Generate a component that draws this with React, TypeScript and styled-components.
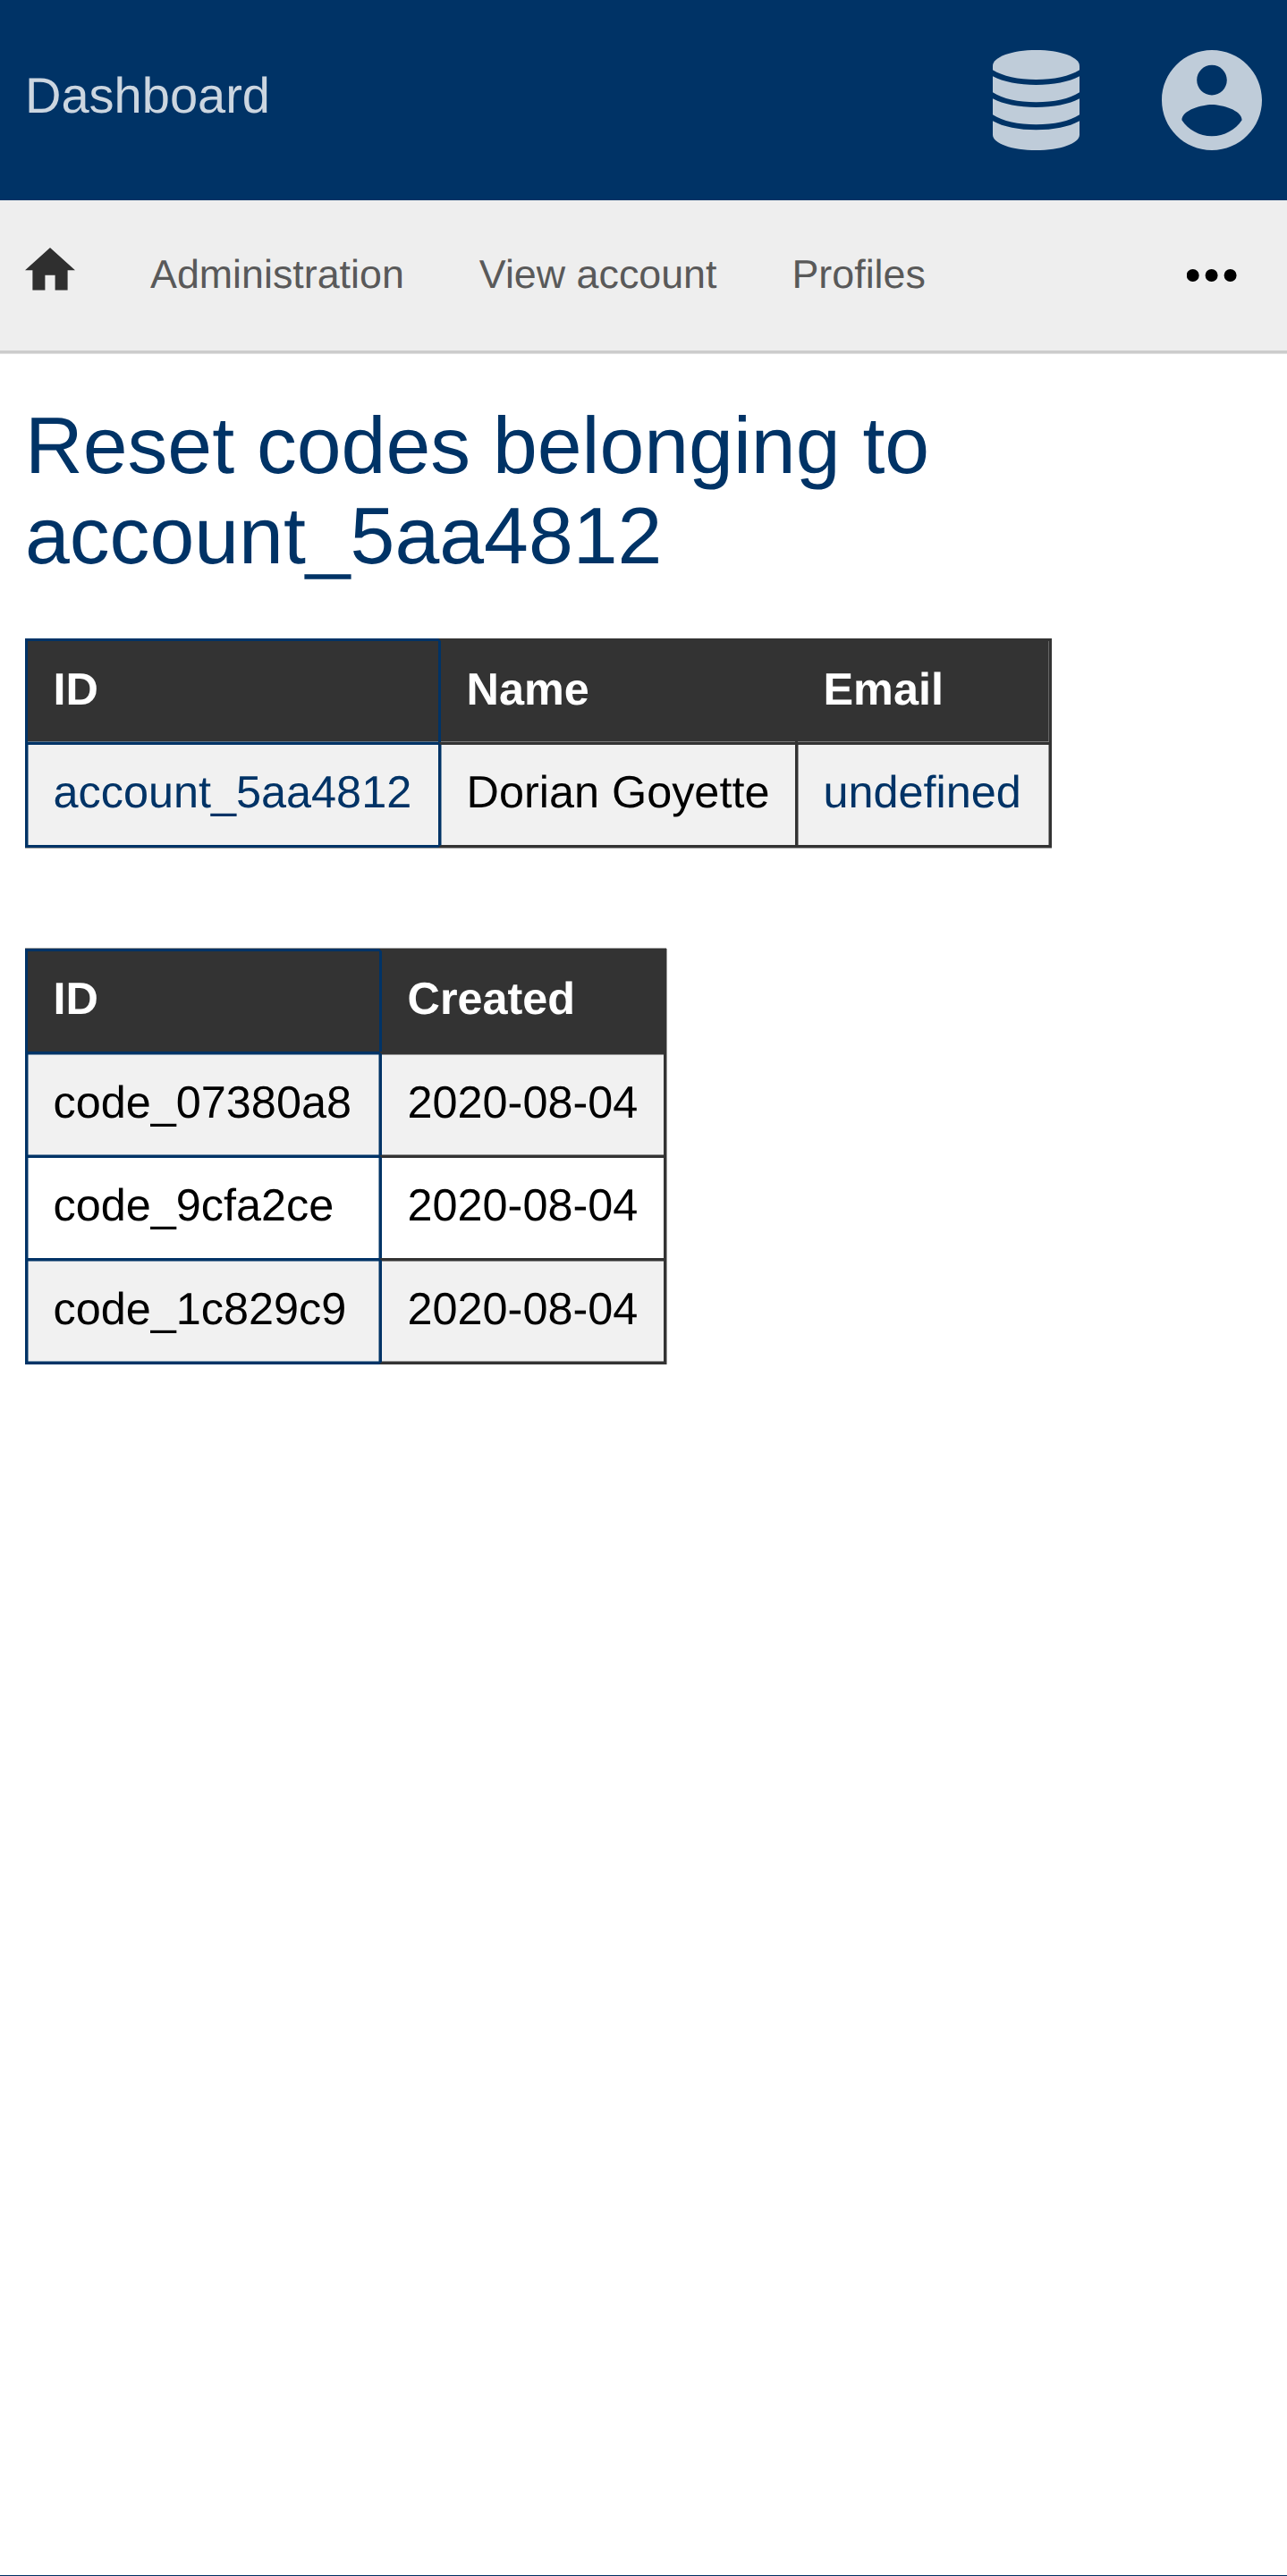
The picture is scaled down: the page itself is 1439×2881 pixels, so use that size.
import React from "react";
import styled, { createGlobalStyle, css } from "styled-components";

const navy = "#003366";
const ink = "#333333";
const navySoft = "rgba(0, 51, 102, 0.5)";
const inkSoft = "rgba(51, 51, 51, 0.5)";

const GlobalStyle = createGlobalStyle`
  html, body { margin: 0; padding: 0; background: ${navy}; }
  *, *::before, *::after { box-sizing: border-box; }
  body {
    font-family: "Liberation Sans", Arial, Helvetica, sans-serif;
    color: #000;
    text-rendering: geometricPrecision;
  }
  svg { display: block; }
`;

const Page = styled.div`
  min-height: 2881px;
  background: #fff;
  border-bottom: 1px solid ${navy};
`;

const Header = styled.header`
  height: 224px;
  padding: 0 28px;
  display: flex;
  align-items: center;
  background: ${navy};
`;

const Brand = styled.a`
  flex: 1;
  padding-bottom: 11px;
  font-size: 56px;
  line-height: 64px;
  color: #ccd6e0;
  text-decoration: none;
`;

const HeaderIcons = styled.div`
  display: flex;
  gap: 92px;
  color: #bfccd9;
`;

const Nav = styled.nav`
  height: 171px;
  padding: 0 56px 0 28px;
  display: flex;
  align-items: center;
  gap: 84px;
  background: #eee;
  border-bottom: 3px solid #ccc;
  box-shadow: 0 1px 0 #e0e0e0;
`;

const HomeLink = styled.a`
  color: #2f2f2f;
  padding-bottom: 14px;
`;

const NavLink = styled.a`
  font-size: 44.8px;
  line-height: 52px;
  padding-bottom: 2px;
  color: #595959;
  text-decoration: none;
  white-space: nowrap;
`;

const MoreButton = styled.button`
  margin-left: auto;
  padding: 0;
  border: 0;
  background: none;
  color: #000;
`;

const Main = styled.main`
  padding: 53px 28px 0;
`;

const Title = styled.h1`
  margin: 0 0 64px;
  max-width: 1200px;
  font-size: 89.6px;
  line-height: 101px;
  font-weight: 400;
  color: ${navy};
`;

const Table = styled.table<{ $width: number; $softBottom?: boolean; $softRight?: boolean }>`
  width: ${(p) => p.$width}px;
  table-layout: fixed;
  border-collapse: separate;
  border-spacing: 0;
  margin-bottom: 113px;
  font-size: 50.4px;
  line-height: 57px;
  ${(p) => p.$softBottom && css`box-shadow: 0 1px 0 ${inkSoft};`}
  ${(p) => p.$softRight && css`box-shadow: 1px 0 0 ${inkSoft}, 0 -1px 0 ${inkSoft};`}
`;

const Column = styled.col<{ $width: number }>`
  width: ${(p) => p.$width}px;
`;

/* Rows alternate between 115px and 116px; the tall ones start flush on a pixel. */
type RowProps = { $height: number; $flush?: boolean; $shade?: string };

const Row = styled.tr<RowProps>`
  height: ${(p) => p.$height}px;
  background: ${(p) => p.$shade ?? "#fff"};
  & > * { padding-top: ${(p) => (p.$flush ? 25 : 24)}px; }
`;

type CellProps = {
  $id?: boolean;
  $afterId?: boolean;
  $last?: boolean;
  $bottom?: boolean;
  $edges?: string;
};

const cell = css<CellProps>`
  padding-left: 28.5px;
  padding-right: 0;
  padding-bottom: 0;
  text-align: left;
  vertical-align: top;
  white-space: nowrap;
  border: 0 solid ${(p) => (p.$id ? navy : ink)};
  border-top-width: 3px;
  border-left-width: 3px;
  border-right-width: ${(p) => (p.$last ? 3 : 0)}px;
  border-bottom-width: ${(p) => (p.$bottom ? 3 : 0)}px;
  ${(p) => p.$afterId && css`border-left-color: ${navy};`}
  box-shadow: ${(p) => p.$edges ?? "none"};
`;

const HeadCell = styled.th<CellProps>`
  ${cell}
  color: #fff;
  font-weight: 700;
`;

const Cell = styled.td<CellProps>`
  ${cell}
`;

const CellLink = styled.a`
  color: ${navy};
  text-decoration: none;
`;

/* Fine inner hairlines that sit beside the cell rules. */
const top = (c: string) => `inset 0 1px 0 ${c}`;
const bottom = (c: string) => `inset 0 -1px 0 ${c}`;
const left = (c: string) => `inset 1px 0 0 ${c}`;
const right = (c: string) => `inset -1px 0 0 ${c}`;
const edges = (...parts: string[]) => parts.join(", ");

const DatabaseIcon = () => (
  <svg width="97" height="112" viewBox="0 0 291 336" fill="currentColor">
    <path d="M0 53C0 23 65 0 145.500 0S291 23 291 53V67C258 88 205 99 145.500 99S33 88 0 67Z" />
    <path d="M0 88C35 107 88 117 145.500 117S256 107 291 88V142C258 164 205 175 145.500 175S33 164 0 142Z" />
    <path d="M0 163C35 182 88 192 145.500 192S256 182 291 163V217C258 239 205 250 145.500 250S33 239 0 217Z" />
    <path d="M0 238C35 258 88 268 145.500 268S256 258 291 238V284C291 313 226 336 145.500 336S0 313 0 284Z" />
  </svg>
);

const AccountIcon = () => (
  <svg width="112" height="112" viewBox="2 2 20 20" fill="currentColor">
    <path d="M12 2C6.480 2 2 6.480 2 12s4.480 10 10 10 10-4.480 10-10S17.520 2 12 2zm0 3c1.660 0 3 1.340 3 3s-1.340 3-3 3-3-1.340-3-3 1.340-3 3-3zm0 14.200c-2.500 0-4.710-1.280-6-3.220.030-1.990 4-3.080 6-3.080 1.990 0 5.970 1.090 6 3.080-1.290 1.940-3.500 3.220-6 3.220z" />
  </svg>
);

const HomeIcon = () => (
  <svg width="56" height="48" viewBox="2 3 20 17.143" fill="currentColor">
    <path d="M10 20v-6h4v6h5v-8h3L12 3 2 12h3v8z" />
  </svg>
);

const MoreIcon = () => (
  <svg width="56" height="14" viewBox="0 0 56 14" fill="currentColor">
    <circle cx="6.700" cy="7" r="7" />
    <circle cx="27.600" cy="7" r="7" />
    <circle cx="48.600" cy="7" r="7" />
  </svg>
);

const codes = [
  { id: "code_07380a8", created: "2020-08-04" },
  { id: "code_9cfa2ce", created: "2020-08-04" },
  { id: "code_1c829c9", created: "2020-08-04" },
];

const AccountTable = () => (
  <Table $width={1148} $softBottom>
    <colgroup>
      <Column $width={462} />
      <Column $width={399} />
      <Column $width={287} />
    </colgroup>
    <thead>
      <Row $height={116} $flush $shade={ink}>
        <HeadCell $id $edges={bottom("#5f7488")}>ID</HeadCell>
        <HeadCell $afterId $edges={bottom("#7b7b7b")}>Name</HeadCell>
        <HeadCell $last $edges={edges(bottom("#7b7b7b"), right("#666"))}>Email</HeadCell>
      </Row>
    </thead>
    <tbody>
      <Row $height={118} $shade="#f1f1f1">
        <Cell $id $bottom $edges={left(navySoft)}>
          <CellLink>account_5aa4812</CellLink>
        </Cell>
        <Cell $afterId $bottom $edges={left(navySoft)}>Dorian Goyette</Cell>
        <Cell $last $bottom $edges={edges(left(inkSoft), right(inkSoft))}>
          <CellLink>undefined</CellLink>
        </Cell>
      </Row>
    </tbody>
  </Table>
);

const CodesTable = () => (
  <Table $width={717} $softRight>
    <colgroup>
      <Column $width={396} />
      <Column $width={321} />
    </colgroup>
    <thead>
      <Row $height={115} $shade={ink}>
        <HeadCell $id>ID</HeadCell>
        <HeadCell $afterId $last>Created</HeadCell>
      </Row>
    </thead>
    <tbody>
      {codes.map((code, i) => {
        const flush = i % 2 === 0;
        const isLast = i === codes.length - 1;
        const rules = (c: string) => (flush ? [top(c), bottom(c)] : []);
        return (
          <Row
            key={code.id}
            $height={(flush ? 116 : 115) + (isLast ? 3 : 0)}
            $flush={flush}
            $shade={flush ? "#f1f1f1" : "#fff"}
          >
            <Cell
              $id
              $bottom={isLast}
              $edges={edges(left(navySoft), right(navySoft), ...rules(navySoft))}
            >
              {code.id}
            </Cell>
            <Cell
              $afterId
              $last
              $bottom={isLast}
              $edges={flush ? edges(...rules(inkSoft)) : undefined}
            >
              {code.created}
            </Cell>
          </Row>
        );
      })}
    </tbody>
  </Table>
);

export default function App() {
  return (
    <>
      <GlobalStyle />
      <Page>
        <Header>
          <Brand>Dashboard</Brand>
          <HeaderIcons>
            <DatabaseIcon />
            <AccountIcon />
          </HeaderIcons>
        </Header>
        <Nav>
          <HomeLink aria-label="Home">
            <HomeIcon />
          </HomeLink>
          <NavLink>Administration</NavLink>
          <NavLink>View account</NavLink>
          <NavLink>Profiles</NavLink>
          <MoreButton aria-label="More">
            <MoreIcon />
          </MoreButton>
        </Nav>
        <Main>
          <Title>Reset codes belonging to account_5aa4812</Title>
          <AccountTable />
          <CodesTable />
        </Main>
      </Page>
    </>
  );
}
